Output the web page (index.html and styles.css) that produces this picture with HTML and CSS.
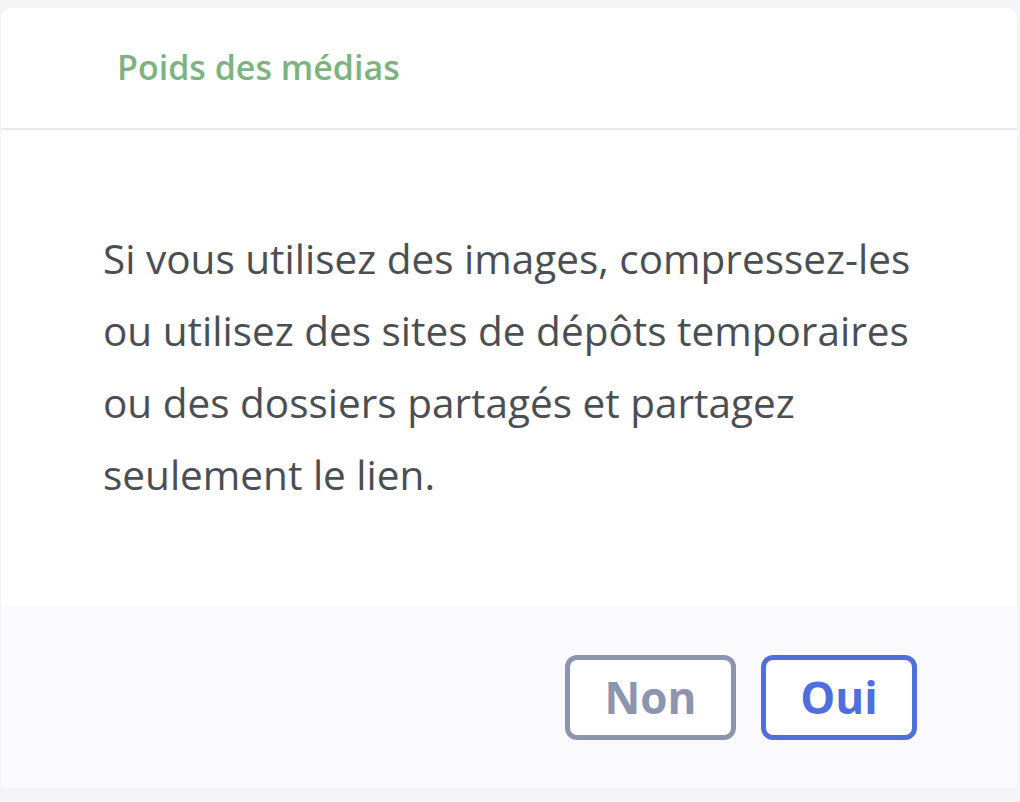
FILE: index.html
```html
<!DOCTYPE html>
<html lang="fr">
<head>
<meta charset="utf-8">
<title>Poids des médias</title>
<link rel="stylesheet" href="styles.css">
</head>
<body>
<div class="modal">
  <div class="modal-header">
    <h2 class="modal-title">Poids des médias</h2>
  </div>
  <div class="modal-body">
    <p class="modal-text">Si vous utilisez des images, compressez-les ou utilisez des sites de dépôts temporaires ou des dossiers partagés et partagez seulement le lien.</p>
  </div>
  <div class="modal-footer">
    <button class="btn btn-secondary">Non</button>
    <button class="btn btn-primary">Oui</button>
  </div>
</div>
</body>
</html>
```
FILE: styles.css
```css
html, body {
  margin: 0;
  padding: 0;
  background: #f5f5f7;
  height: 100%;
}
body {
  font-family: "Open Sans", "Noto Sans", sans-serif;
  padding: 8px 3px 14px 1px;
  box-sizing: border-box;
}
.modal {
  background: #ffffff;
  border-radius: 10px 10px 0 0;
  box-shadow: 0 1px 3px rgba(0, 0, 0, 0.03);
  overflow: hidden;
}
.modal-header {
  height: 118px;
  display: flex;
  align-items: center;
  padding-left: 116px;
  border-bottom: 2px solid #e7e8eb;
  padding-bottom: 2px;
}
.modal-title {
  margin: 0;
  font-size: 34px;
  font-weight: 600;
  color: #7db381;
  letter-spacing: 0;
}
.modal-body {
  padding: 93px 98px 95px 102px;
}
.modal-text {
  margin: 0;
  font-size: 40.5px;
  line-height: 72px;
  color: #4b4e53;
}
.modal-footer {
  height: 182px;
  background: #fafafc;
  display: flex;
  align-items: center;
  justify-content: flex-end;
  gap: 25px;
  padding-right: 100px;
}
.btn {
  font-family: "Open Sans", "Noto Sans", sans-serif;
  height: 85px;
  box-sizing: border-box;
  border-radius: 12px;
  border: 5px solid;
  background: #ffffff;
  font-size: 44px;
  font-weight: 700;
  padding: 0;
  display: flex;
  align-items: center;
  justify-content: center;
}
.btn-secondary {
  width: 171px;
  color: #8d94ad;
  border-color: #8d94ad;
}
.btn-primary {
  width: 156px;
  color: #4f6fdc;
  border-color: #4f6fdc;
}
```
